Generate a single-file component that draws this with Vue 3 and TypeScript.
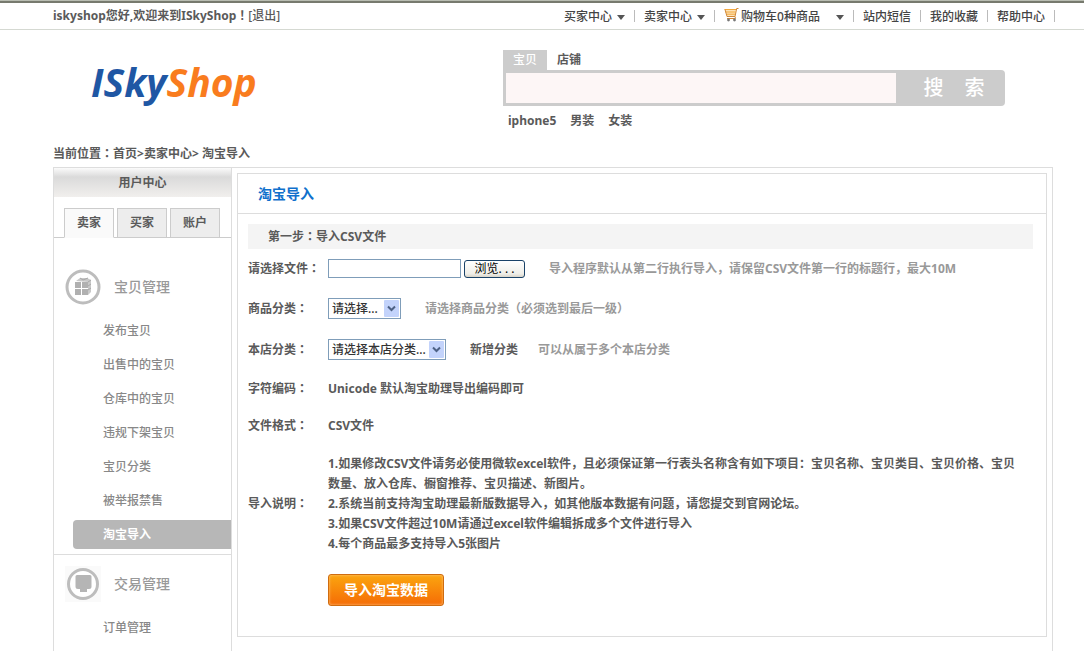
<script setup lang="ts">
import { ref } from 'vue'

interface NavItem {
  label: string
  arrow?: boolean
  cart?: boolean
}

const navItems: NavItem[] = [
  { label: '买家中心', arrow: true },
  { label: '卖家中心', arrow: true },
  { label: '购物车0种商品', arrow: true, cart: true },
  { label: '站内短信' },
  { label: '我的收藏' },
  { label: '帮助中心' },
]

const hotWords: string[] = ['iphone5', '男装', '女装']
const roles: string[] = ['卖家', '买家', '账户']
const activeRole = ref('卖家')
const goodsMenu: string[] = [
  '发布宝贝',
  '出售中的宝贝',
  '仓库中的宝贝',
  '违规下架宝贝',
  '宝贝分类',
  '被举报禁售',
  '淘宝导入',
]
const activeMenu = ref('淘宝导入')
const keyword = ref('')
const fileName = ref('')
const notes: string[] = [
  '1.如果修改CSV文件请务必使用微软excel软件，且必须保证第一行表头名称含有如下项目：宝贝名称、宝贝类目、宝贝价格、宝贝数量、放入仓库、橱窗推荐、宝贝描述、新图片。',
  '2.系统当前支持淘宝助理最新版数据导入，如其他版本数据有问题，请您提交到官网论坛。',
  '3.如果CSV文件超过10M请通过excel软件编辑拆成多个文件进行导入',
  '4.每个商品最多支持导入5张图片',
]
</script>

<template>
  <div class="page">
    <div class="topbar">
      <div class="welcome">iskyshop您好,欢迎来到ISkyShop<span class="mid">！</span><a href="#">[退出]</a></div>
      <nav class="topnav">
        <a v-for="item in navItems" :key="item.label" href="#" class="nav-item" :class="{ cart: item.cart }">
          <svg v-if="item.cart" class="cart-icon" width="15" height="14" viewBox="0 0 15 14" aria-hidden="true">
            <path d="M1 1.5h11L11 8H3z" fill="#fde3b8" />
            <path d="M0.5 1.5H12M1.5 4h10M2.5 6.2h9" stroke="#f3a93c" stroke-width="1" fill="none" />
            <path d="M14.5 0.5h-1.8L11 8.5H3L1 1.5M11 8.5l.5 2H3" stroke="#d08838" stroke-width="1" fill="none" />
            <circle cx="4.5" cy="12" r="1.4" fill="#777" />
            <circle cx="10.5" cy="12" r="1.4" fill="#777" />
          </svg>
          <span>{{ item.label }}</span>
          <i v-if="item.arrow" class="caret"></i>
        </a>
      </nav>
    </div>

    <header class="header">
      <a href="#" class="logo"><span class="logo-a">ISky</span><span class="logo-b">Shop</span></a>
      <form class="search" @submit.prevent>
        <div class="search-tabs">
          <button type="button" class="search-tab on">宝贝</button>
          <button type="button" class="search-tab">店铺</button>
        </div>
        <div class="search-bar">
          <input v-model="keyword" type="text" aria-label="搜索" />
          <button type="submit" class="search-btn"><span>搜</span><span>索</span></button>
        </div>
        <div class="hot">
          <a v-for="word in hotWords" :key="word" href="#">{{ word }}</a>
        </div>
      </form>
    </header>

    <div class="crumbs">当前位置<span class="mid">：</span><a href="#">首页</a>&gt;<a href="#">卖家中心</a>&gt; 淘宝导入</div>

    <div class="frame">
      <aside class="sidebar">
        <h2 class="side-title">用户中心</h2>
        <div class="roles">
          <button v-for="role in roles" :key="role" type="button" :class="{ on: role === activeRole }" @click="activeRole = role">{{ role }}</button>
        </div>
        <section class="group">
          <h3>
            <svg width="36" height="36" viewBox="0 0 36 36" aria-hidden="true">
              <circle cx="18" cy="18" r="16" fill="#fff" stroke="#bdbdbd" stroke-width="3" />
              <path d="M11 12l4-3h7l4 2v12l-3 3V13z" fill="#c8c8c8" />
              <path d="M10 13h6v6h-6zM17 13h6v6h-6zM10 20h6v6h-6zM17 20h6v6h-6z" fill="#b0b0b0" />
              <path d="M15 9l3 2 5-2M23 13l3-2M23 17l3-2M23 21l3-2" fill="none" stroke="#a8a8a8" />
            </svg>
            <span>宝贝管理</span>
          </h3>
          <ul>
            <li v-for="name in goodsMenu" :key="name">
              <a href="#" :class="{ on: name === activeMenu }" @click.prevent="activeMenu = name">{{ name }}</a>
            </li>
          </ul>
        </section>
        <section class="group second">
          <h3>
            <svg width="36" height="36" viewBox="0 0 36 36" aria-hidden="true">
              <path d="M0 0h36v36H0z" fill="#fafafa" />
              <circle cx="18" cy="18" r="14.5" fill="#fff" stroke="#bdbdbd" stroke-width="3" />
              <path d="M12 9h13a1.5 1.5 0 0 1 1.500 1.500v10a2.500 2.500 0 0 1-2.500 2.500h-2v3h-7v-3h-2a2.500 2.500 0 0 1-2.500-2.500v-10A1.500 1.500 0 0 1 12 9z" fill="#b5b5b5" />
            </svg>
            <span>交易管理</span>
          </h3>
          <ul>
            <li><a href="#">订单管理</a></li>
          </ul>
        </section>
      </aside>

      <main class="panel">
        <h1>淘宝导入</h1>
        <form class="form" @submit.prevent>
          <h2 class="step">第一步<span class="mid">：</span>导入CSV文件</h2>
          <div class="row">
            <label for="file">请选择文件<span class="mid">：</span></label>
            <div class="field">
              <input id="file" v-model="fileName" class="file-name" type="text" />
              <button type="button" class="browse">浏览. . .</button>
              <span class="hint">导入程序默认从第二行执行导入，请保留CSV文件第一行的标题行，最大10M</span>
            </div>
          </div>
          <div class="row tall">
            <label for="category">商品分类<span class="mid">：</span></label>
            <div class="field">
              <span class="pick narrow">
                <select id="category"><option>请选择...</option></select>
                <svg width="15" height="17" viewBox="0 0 15 17" aria-hidden="true"><rect width="15" height="17" rx="1" fill="#c3d3fb" /><path d="M4 6.500l3.500 3.500 3.500-3.500" fill="none" stroke="#4d6185" stroke-width="2" /></svg>
              </span>
              <span class="hint">请选择商品分类（必须选到最后一级）</span>
            </div>
          </div>
          <div class="row tall">
            <label for="shop-category">本店分类<span class="mid">：</span></label>
            <div class="field">
              <span class="pick wide">
                <select id="shop-category"><option>请选择本店分类...</option></select>
                <svg width="15" height="17" viewBox="0 0 15 17" aria-hidden="true"><rect width="15" height="17" rx="1" fill="#c3d3fb" /><path d="M4 6.500l3.500 3.500 3.500-3.500" fill="none" stroke="#4d6185" stroke-width="2" /></svg>
              </span>
              <a href="#" class="add">新增分类</a>
              <span class="hint near">可以从属于多个本店分类</span>
            </div>
          </div>
          <div class="row short">
            <span class="label">字符编码<span class="mid">：</span></span>
            <div class="field">Unicode 默认淘宝助理导出编码即可</div>
          </div>
          <div class="row short">
            <span class="label">文件格式<span class="mid">：</span></span>
            <div class="field">CSV文件</div>
          </div>
          <div class="row notes">
            <span class="label">导入说明<span class="mid">：</span></span>
            <div class="note-text">
              <p v-for="note in notes" :key="note">{{ note }}</p>
            </div>
          </div>
          <div class="row action">
            <button type="submit" class="submit">导入淘宝数据</button>
          </div>
        </form>
      </main>
    </div>
  </div>
</template>

<style>
body {
  margin: 0;
  background: #fff;
}
</style>

<style scoped>
.page {
  display: flex;
  flex-direction: column;
  min-height: 100vh;
  box-sizing: border-box;
  font: 700 12px/20px "Noto Sans", "Noto Sans CJK SC", sans-serif;
  color: #5a5a5a;
}
.page * {
  box-sizing: border-box;
}
a {
  color: inherit;
  text-decoration: none;
}
button,
input,
select {
  font: inherit;
  color: inherit;
  margin: 0;
  padding: 0;
}
h1,
h2,
h3,
p,
ul {
  margin: 0;
  padding: 0;
  font-weight: inherit;
  list-style: none;
}
.mid {
  font-family: "Noto Sans CJK TC", sans-serif;
  line-height: 1;
}
.topbar {
  display: flex;
  justify-content: space-between;
  height: 30px;
  padding: 3px 29px 0 53px;
  border-bottom: 1px solid #d5d9d2;
  background: linear-gradient(#b9bdb2 0 1px, #777a6e 1px 3px, #fff 3px);
}
.welcome {
  line-height: 25px;
}
.welcome a {
  font-weight: 500;
}
.topnav {
  display: flex;
  padding-top: 4px;
  font-weight: 500;
  color: #444;
}
.nav-item {
  display: flex;
  align-items: center;
  height: 20px;
  padding: 0 10px 0 9px;
  background: linear-gradient(#bbb, #bbb) right 3px / 1px 12px no-repeat;
}
.cart-icon {
  margin: -4px 2px 0 0;
}
.caret {
  margin-left: 5px;
  border: 4px solid transparent;
  border-top: 5px solid #555;
  border-bottom: 0;
}
.cart .caret {
  margin-left: 16px;
}
.header {
  display: flex;
  justify-content: space-between;
  padding: 20px 79px 0 91px;
  height: 114px;
}
.logo {
  font: italic 700 39px/48px "Open Sans", sans-serif;
  margin-top: 8px;
}
.logo-a {
  color: #1f57a4;
}
.logo-b {
  color: #f97c1e;
}
.search {
  width: 502px;
}
.search-tabs {
  display: flex;
}
.search-tab {
  width: 44px;
  height: 20px;
  border: 0;
  background: none;
}
.search-tab.on {
  background: #ccc;
  color: #fff;
  font-weight: 500;
}
.search-bar {
  display: flex;
  height: 36px;
  padding: 3px;
  background: #ccc;
  border-radius: 0 4px 4px 0;
}
.search-bar input {
  flex: 1;
  min-width: 0;
  border: 0;
  background: #fdf6f6;
  padding: 0 8px;
}
.search-btn {
  display: flex;
  justify-content: center;
  align-items: center;
  gap: 21px;
  width: 106px;
  padding-left: 10px;
  border: 0;
  background: none;
  color: #fff;
  font-size: 20px;
  font-weight: 500;
}
.hot {
  display: flex;
  gap: 14px;
  padding: 5px;
}
.crumbs {
  padding: 0 53px 3px;
}
.frame {
  flex: 1;
  display: flex;
  margin: 0 31px 0 53px;
  border: 1px solid #ddd;
  border-bottom: 0;
}
.sidebar {
  flex: none;
  width: 178px;
  border-right: 1px solid #ddd;
}
.side-title {
  height: 29px;
  font-size: 12px;
  line-height: 29px;
  text-align: center;
  background: linear-gradient(#fbfbfb, #dadada 9px, #f1efed);
}
.roles {
  display: flex;
  gap: 3px;
  height: 41px;
  padding: 11px 10px 0;
  background: linear-gradient(#ccc, #ccc) 0 100% / 100% 1px no-repeat;
}
.roles button {
  width: 50px;
  height: 30px;
  border: 1px solid #ccc;
  background: #ededed;
}
.roles button.on {
  border-bottom-color: #fafafa;
  background: #fafafa;
}
.group {
  padding-top: 31px;
  font-weight: 500;
  color: #888;
}
.group h3 {
  display: flex;
  align-items: center;
  gap: 13px;
  height: 36px;
  padding-left: 11px;
  font-size: 14px;
  color: #999;
}
.group ul {
  padding: 9px 0 2px;
}
.group li {
  padding: 2px 0 3px 19px;
}
.group li a {
  display: block;
  padding-left: 30px;
  line-height: 29px;
  border-radius: 4px 0 0 4px;
}
.group li a.on {
  background: #b7b7b7;
  color: #fff;
  font-weight: 700;
}
.second {
  padding-top: 11px;
  border-top: 1px solid #ddd;
}
.panel {
  flex: 1;
  min-width: 0;
  align-self: flex-start;
  margin: 5px;
  padding-bottom: 30px;
  border: 1px solid #ddd;
}
.panel h1 {
  padding: 0 20px;
  height: 40px;
  border-bottom: 1px solid #ddd;
  font-size: 14px;
  line-height: 40px;
  color: #1070cc;
}
.form {
  padding: 10px 13px 0 10px;
}
.step {
  height: 25px;
  padding-left: 20px;
  font-size: 12px;
  line-height: 25px;
  background: #f4f4f4;
}
.row {
  display: grid;
  grid-template-columns: 80px 1fr;
  align-items: center;
  min-height: 39px;
}
.row.tall {
  min-height: 41px;
}
.row.short {
  min-height: 37px;
}
.field {
  display: flex;
  align-items: center;
  white-space: nowrap;
}
.file-name {
  width: 133px;
  height: 19px;
  border: 1px solid #7f9db9;
  background: #fff;
}
.browse {
  width: 61px;
  height: 18px;
  margin-left: 3px;
  border: 1px solid #1a4268;
  border-radius: 3px;
  background: linear-gradient(#fff, #efeee8 80%, #d8d3c8);
  color: #000;
  font-weight: 400;
  line-height: 14px;
}
.hint {
  margin-left: 24px;
  color: #999;
}
.hint.near {
  margin-left: 20px;
}
.pick {
  position: relative;
  display: block;
  height: 21px;
}
.pick.narrow {
  width: 73px;
}
.pick.wide {
  width: 118px;
}
.pick select {
  width: 100%;
  height: 21px;
  padding-left: 3px;
  border: 1px solid #7f9db9;
  border-radius: 0;
  background: #fff;
  color: #333;
  font-weight: 500;
  appearance: none;
}
.pick svg {
  position: absolute;
  top: 2px;
  right: 2px;
  pointer-events: none;
}
.add {
  margin-left: 24px;
}
.row.notes {
  padding: 10px 12px 10px 0;
}
.row.action {
  display: block;
  padding: 10px 0 0 80px;
}
.submit {
  width: 116px;
  height: 32px;
  border: 1px solid #cf6c10;
  border-radius: 3px;
  background: linear-gradient(#fba50f, #f56c06);
  box-shadow: inset 0 0 3px #ffc680;
  color: #fff;
  font-size: 14px;
}
</style>
